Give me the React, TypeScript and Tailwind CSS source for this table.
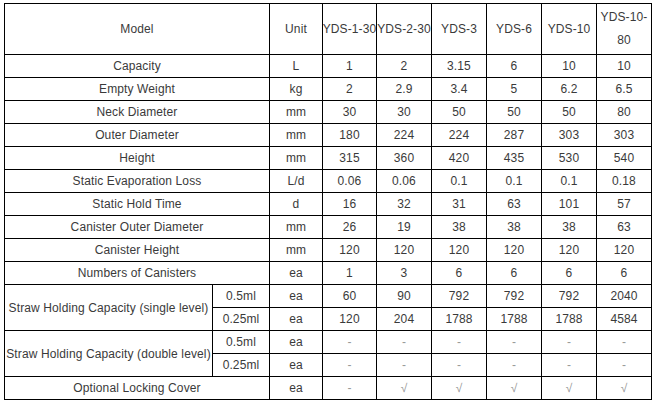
import React from "react";

const models = ["YDS-1-30", "YDS-2-30", "YDS-3", "YDS-6", "YDS-10", "YDS-10-80"];

const rows: [string, string, string[]][] = [
  ["Capacity", "L", ["1", "2", "3.15", "6", "10", "10"]],
  ["Empty Weight", "kg", ["2", "2.9", "3.4", "5", "6.2", "6.5"]],
  ["Neck Diameter", "mm", ["30", "30", "50", "50", "50", "80"]],
  ["Outer Diameter", "mm", ["180", "224", "224", "287", "303", "303"]],
  ["Height", "mm", ["315", "360", "420", "435", "530", "540"]],
  ["Static Evaporation Loss", "L/d", ["0.06", "0.06", "0.1", "0.1", "0.1", "0.18"]],
  ["Static Hold Time", "d", ["16", "32", "31", "63", "101", "57"]],
  ["Canister Outer Diameter", "mm", ["26", "19", "38", "38", "38", "63"]],
  ["Canister Height", "mm", ["120", "120", "120", "120", "120", "120"]],
  ["Numbers of Canisters", "ea", ["1", "3", "6", "6", "6", "6"]],
];

const cell = "bg-white flex items-center justify-center text-center whitespace-nowrap";

function Val({ v }: { v: string }) {
  const light = v === "-" || v === "√";
  return <div className={`${cell} ${light ? "text-[#999]" : ""}`}>{v}</div>;
}

export default function App() {
  return (
    <div className="w-[658px] h-[404px] bg-white pl-[4px] pt-[3px]">
      <div
        className="grid w-max bg-black gap-px p-px text-[12px] tracking-[0.12px] text-[#3a3a3a] grid-cols-[207px_56px_52px_53px_54px_54px_54px_54px_54px] grid-rows-[50px_repeat(15,22px)]"
        style={{ fontFamily: '"Liberation Sans", Arial, sans-serif' }}
      >
        <div className={`${cell} col-span-2`}>Model</div>
        <div className={cell}>Unit</div>
        {models.map((m) => (
          <div
            key={m}
            className={`bg-white flex items-center justify-center text-center leading-[23px] ${
              m === "YDS-10-80" ? "break-words" : "whitespace-nowrap"
            }`}
          >
            {m}
          </div>
        ))}

        {rows.map(([name, unit, vals]) => (
          <React.Fragment key={name}>
            <div className={`${cell} col-span-2`}>{name}</div>
            <div className={cell}>{unit}</div>
            {vals.map((v, i) => (
              <Val key={i} v={v} />
            ))}
          </React.Fragment>
        ))}

        {/* single level */}
        <div className={`${cell} row-span-2 overflow-visible`}>Straw Holding Capacity (single level)</div>
        <div className={cell}>0.5ml</div>
        <div className={cell}>ea</div>
        {["60", "90", "792", "792", "792", "2040"].map((v, i) => (
          <Val key={i} v={v} />
        ))}
        <div className={cell}>0.25ml</div>
        <div className={cell}>ea</div>
        {["120", "204", "1788", "1788", "1788", "4584"].map((v, i) => (
          <Val key={i} v={v} />
        ))}

        {/* double level */}
        <div className={`${cell} row-span-2 overflow-visible`}>Straw Holding Capacity (double level)</div>
        <div className={cell}>0.5ml</div>
        <div className={cell}>ea</div>
        {["-", "-", "-", "-", "-", "-"].map((v, i) => (
          <Val key={i} v={v} />
        ))}
        <div className={cell}>0.25ml</div>
        <div className={cell}>ea</div>
        {["-", "-", "-", "-", "-", "-"].map((v, i) => (
          <Val key={i} v={v} />
        ))}

        <div className={`${cell} col-span-2`}>Optional Locking Cover</div>
        <div className={cell}>ea</div>
        {["-", "√", "√", "√", "√", "√"].map((v, i) => (
          <Val key={i} v={v} />
        ))}
      </div>
    </div>
  );
}
